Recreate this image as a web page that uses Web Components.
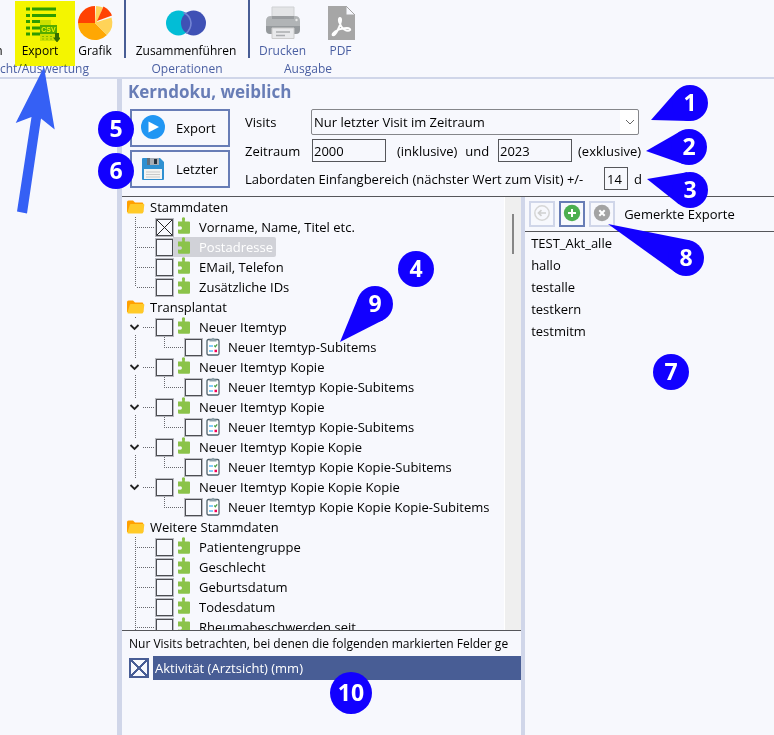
<!DOCTYPE html>
<html lang="de">
<head>
<meta charset="utf-8">
<title>Kerndoku Export</title>
<style>
  body { margin: 0; font: 13px/20px "Open Sans", "Noto Sans", sans-serif; color: #000; background: #f7f8fd; }
</style>
</head>
<body>
<export-app></export-app>
<script>
const define = (name, html, setup) => {
  const tpl = document.createElement('template');
  tpl.innerHTML = '<style>*{box-sizing:border-box}button,input,select{font:inherit;color:inherit;margin:0}svg{display:block}</style>' + html;
  customElements.define(name, class extends HTMLElement {
    constructor() {
      super();
      this.attachShadow({ mode: 'open' }).append(tpl.content.cloneNode(true));
    }
    connectedCallback() { if (setup) setup(this, this.shadowRoot); }
  });
};

const ICONS = {
  csv: `<svg width="40" height="40" viewBox="0 0 40 40"><path d="M6 7h4m2 0h24M6 13.500h4m2 0h24M6 19.500h4m2 0h8M6 26h4m2 0h8M6 32h4m2 0h8" stroke="#2f9e12" stroke-width="3.200"/><path d="M20 18h11l5 5v16H20z" fill="#cfe3a0"/><path d="M31 18l5 5h-5z" fill="#fbf6a0"/><rect x="20" y="23" width="17" height="9" fill="#55ad22"/><text x="28.500" y="30" text-anchor="middle" font-family="Liberation Sans, sans-serif" font-weight="700" font-size="7" fill="#f0f7dc">CSV</text><path d="M22 34.500h2m2 0h2m2 0h2M22 37h2m2 0h2m2 0h2" stroke="#86bd40"/><path d="M35 31h4v4.500h2l-4 5-4-5h2z" fill="#356f22"/></svg>`,
  pie: `<svg width="40" height="40" viewBox="0 0 40 40"><path d="M20 21V4A17 17 0 0 0 3 21z" fill="#ff4203"/><path d="M20 21H3a17 17 0 0 0 29 12z" fill="#ffa703"/><path d="M20 21l12 12A17 17 0 0 0 36.500 15.500L22 20l6-14.500A17 17 0 0 0 21 4z" fill="#ffd358"/><path d="M22 19L28.500 4.500q6 3 8.500 9z" fill="#ff4203"/></svg>`,
  merge: `<svg width="40" height="40" viewBox="0 0 40 40"><circle cx="12.500" cy="21" r="12.500" fill="#02bdd6"/><circle cx="27.500" cy="21" r="12.500" fill="#3f51b5"/><path d="M17.500 10.500a12.500 12.500 0 0 1 7.500 10.500q0 6-5 10.500" fill="none" stroke="#7485d4" stroke-width="1.600"/></svg>`,
  print: `<svg width="40" height="40" viewBox="0 0 40 40"><path d="M9 5h22v11H9z" fill="#e3e4e6" stroke="#cfd1d3"/><rect x="3" y="18" width="34" height="14" rx="4" fill="#95999c"/><path d="M3 24v-5q0-5 5-5h24q5 0 5 5v5z" fill="#b1b4b6"/><path d="M9 14h22v3H9z" fill="#999c9f"/><path d="M9 26h22v10.500H9z" fill="#e8e9eb" stroke="#ccc"/><path d="M13 30h14M13 33.500h9" stroke="#aaadb0" stroke-width="1.500"/><circle cx="33.500" cy="18" r="1.200" fill="#e9e9e9"/></svg>`,
  pdf: `<svg width="40" height="40" viewBox="0 0 40 40"><path d="M7 4h18l9 9v25H7z" fill="#a6a6a6"/><path d="M25 4v9h9z" fill="#f7f8fd" stroke="#a6a6a6"/><path d="M19 16q-1.700.500-.800 4q1.500 5 5 7.500q4 2.500 6 .300q0-2.300-6-1.500q-5.500.800-8.700 3q-3.500 2.600-2.800 3.800q2 .700 4.800-4.600q2.500-5 3.300-8.600q.700-3.700-.800-3.900z" fill="none" stroke="#fff" stroke-width="2"/></svg>`,
  play: `<svg width="24" height="24" viewBox="0 0 24 24"><circle cx="12" cy="11" r="12" fill="#2196f3"/><path d="M7.500 5.500L18 11 7.500 16.500z" fill="#fff"/></svg>`,
  disk: `<svg width="24" height="24" viewBox="0 0 24 24"><path d="M1 2q0-1 1-1h17l4 4v17q0 1-1 1H2q-1 0-1-1z" fill="#2f90d1"/><path d="M6 1h12v7H6z" fill="#a6adb5"/><path d="M6 1h3v7H6z" fill="#63707c"/><rect x="13" y="2" width="3" height="5" fill="#26323f"/><path d="M3 12h18v10H3z" fill="#f4f4f2"/><path d="M5 15h14M5 17.500h14M5 20h14" stroke="#c9c9c9"/></svg>`,
  folder: `<svg width="18" height="16" viewBox="0 0 18 16"><path d="M0 3q0-1.500 1.500-1.500h4.500l2 2h7q1.300 0 1.300 1.300V13H0z" fill="#ffa000"/><path d="M2.800 6q.2-1 1.200-1h12.500q1 0 .8 1l-1.100 7.500q-.3 1-1.200 1H1.200q-1 0-.8-1z" fill="#ffca28"/></svg>`,
  puzzle: `<svg width="14" height="20" viewBox="0 0 14 20"><path d="M1 4.500h3.700q.8 0 .5-.8Q4.200.300 6.500.300t1.300 3.400q-.3.800.5.800H12q1 0 1 1V15.500q0 1.200-1 1.200H2q-1 0-1-1.200v-2.500q0-.800.800-.500Q5 13.300 5 11T1.800 9.500Q1 9.800 1 9z" fill="#8bc34a"/></svg>`,
  clip: `<svg width="14" height="20" viewBox="0 0 14 20"><rect x="1" y="2.500" width="12" height="15.500" rx="1.500" fill="#fff" stroke="#50626c" stroke-width="1.300"/><path d="M3.500 4.500V2.500H5.500Q5.500.7 7 .7t1.500 1.800h2v2z" fill="#8fa3ad"/><path d="M3 9h4M3 14h4" stroke="#5fbdf8" stroke-width="1.600"/><path d="M8.300 8.500l1 1.200 1.900-2.400" fill="none" stroke="#43a047" stroke-width="1.200"/><path d="M8.500 12.700h2.500v2.500H8.500z" fill="#f50057"/></svg>`,
  back: `<svg width="20" height="20" viewBox="0 0 20 20"><circle cx="10" cy="9" r="7.200" fill="none" stroke="#d6d6d6" stroke-width="1.500"/><path d="M14 9H7M9.500 6.200L6.500 9l3 2.800" fill="none" stroke="#d0d0d0" stroke-width="1.700"/></svg>`,
  plus: `<svg width="20" height="20" viewBox="0 0 20 20"><circle cx="10" cy="9" r="8.200" fill="#4caf50"/><path d="M10 5v8M6 9h8" stroke="#fff" stroke-width="2"/></svg>`,
  cross: `<svg width="20" height="20" viewBox="0 0 20 20"><circle cx="10" cy="9" r="8.200" fill="#a3a3a3"/><path d="M7.300 6.300l5.400 5.400M12.700 6.300l-5.400 5.400" stroke="#fff" stroke-width="2"/></svg>`
};

/* Ribbon */
define('ribbon-item', `<style>
  :host { display: block; flex: none; }
  button { display: grid; justify-items: center; align-content: end; width: 100%; height: 60px; padding: 0; border: 0; background: none; white-space: nowrap; line-height: 18px; }
  :host([muted]) button { color: #4a5fa2; }
</style><button type="button"><span class="icon"></span><span><slot></slot></span></button>`,
  (el, root) => { root.querySelector('.icon').innerHTML = ICONS[el.getAttribute('icon')] || ''; });

define('ribbon-group', `<style>
  :host { display: flex; flex-direction: column; flex: none; position: relative; }
  .items { display: flex; height: 60px; }
  .name { text-align: center; color: #4a5fa2; height: 17px; line-height: 17px; white-space: nowrap; }
  :host([cut]) .name { text-align: left; }
</style><div class="items"><slot></slot></div><div class="name"></div>`,
  (el, root) => { root.querySelector('.name').textContent = el.getAttribute('name'); });

define('app-ribbon', `<style>
  :host { display: flex; height: 79px; border-bottom: 2px solid #d0d6e9; overflow: hidden; font-size: 12px; }
  ribbon-group:nth-of-type(1) { width: 124px; }
  ribbon-group:nth-of-type(2) { width: 122px; }
  ribbon-group:nth-of-type(3) { width: 116px; }
  hr { width: 2px; height: 58px; margin: 0; border: 0; background: #485d95; flex: none; }
  .w1 { width: 14px; margin-left: -8px; margin-right: 8px; }
  .w2 { width: 52px; } .w3 { width: 58px; } .w4 { width: 120px; } .w5 { width: 65px; } .w6 { width: 51px; }
</style>
<ribbon-group name="cht/Auswertung" cut><ribbon-item class="w1">n</ribbon-item><ribbon-item class="w2" icon="csv">Export</ribbon-item><ribbon-item class="w3" icon="pie">Grafik</ribbon-item></ribbon-group>
<hr>
<ribbon-group name="Operationen"><ribbon-item class="w4" icon="merge">Zusammenführen</ribbon-item></ribbon-group>
<hr>
<ribbon-group name="Ausgabe"><ribbon-item class="w5" icon="print" muted>Drucken</ribbon-item><ribbon-item class="w6" icon="pdf" muted>PDF</ribbon-item></ribbon-group>`);

/* Head of the export form */
define('action-button', `<style>
  :host { display: block; }
  button { display: flex; align-items: center; gap: 11px; width: 100px; height: 38px; padding: 0 9px; border: 2px solid #687db6; background: #f7f8fd; }
  svg { overflow: visible; }
</style><button type="button"><span class="icon"></span><span><slot></slot></span></button>`,
  (el, root) => { root.querySelector('.icon').innerHTML = ICONS[el.getAttribute('icon')]; });

define('export-form', `<style>
  :host { display: block; padding: 0 8px 5px; border-bottom: 1px solid #55565a; }
  h1 { margin: 0 -2px; padding-bottom: 4px; font-size: 17px; line-height: 26px; color: #687db6; }
  form { display: flex; gap: 15px; }
  .actions { display: grid; gap: 3px; align-content: start; }
  .fields { display: grid; gap: 3px; flex: 1; min-width: 0; align-content: start; }
  .row { display: flex; align-items: center; height: 25px; white-space: nowrap; }
  .row:first-child { height: 26px; }
  .lead { width: 67px; flex: none; }
  .range { width: 359px; flex: none; }
  .between { width: 112px; padding-left: 11px; display: flex; gap: 8px; flex: none; }
  .after { padding-left: 6px; }
  input { width: 74px; height: 23px; padding: 0 1px; border: 1px solid #55565a; background: #f7f8fd; flex: none; }
  #days { width: 24px; padding: 0 2px; }
  .pick { display: grid; width: 328px; height: 26px; margin-left: -1px; }
  select { grid-area: 1/1; appearance: none; width: 100%; height: 26px; padding: 0 24px 0 2px; border: 1px solid #85868a; border-radius: 2px; background: linear-gradient(#fff, #fff) right/18px no-repeat #f7f8fd; }
  .pick svg { grid-area: 1/1; place-self: center end; margin-right: 4px; pointer-events: none; }
</style>
<h1>Kerndoku, weiblich</h1>
<form>
  <div class="actions"><action-button icon="play">Export</action-button><action-button icon="disk">Letzter</action-button></div>
  <div class="fields">
    <div class="row"><label class="lead" for="visits">Visits</label><div class="pick"><select id="visits"><option>Nur letzter Visit im Zeitraum</option></select><svg width="10" height="8" viewBox="0 0 10 8"><path d="M1 2l4 4 4-4" fill="none" stroke="#666"/></svg></div></div>
    <div class="row"><label class="lead" for="from">Zeitraum</label><input id="from" value="2000"><span class="between"><span>(inklusive)</span><label for="to">und</label></span><input id="to" value="2023"><span class="after">(exklusive)</span></div>
    <div class="row"><label class="range" for="days">Labordaten Einfangbereich (nächster Wert zum Visit) +/-</label><input id="days" value="14"><span class="after">d</span></div>
  </div>
</form>`);

/* Tree */
define('tree-folder', `<style>
  :host { display: flex; align-items: center; height: 20px; padding-left: 5px; gap: 5px; white-space: nowrap; }
  span { line-height: 20px; }
</style><span class="icon"></span><span><slot></slot></span>`,
  (el, root) => { root.querySelector('.icon').innerHTML = ICONS.folder; });

define('tree-node', `<style>
  :host { display: flex; align-items: center; height: 20px; white-space: nowrap; }
  .guide { flex: none; }
  input { appearance: none; flex: none; width: 17px; height: 17px; border: 1px solid #4c4d52; outline: 1px solid #b9bac0; outline-offset: 0; background: #f7f8fd; }
  input:checked { background: linear-gradient(45deg, transparent 47%, #222 47%, #222 53%, transparent 53%), linear-gradient(-45deg, transparent 47%, #222 47%, #222 53%, transparent 53%); }
  label { display: flex; align-items: center; height: 20px; padding: 0 3px 0 4px; gap: 8px; border-radius: 0 2px 2px 0; }
  :host([selected]) label { background: #d1d2d8; color: #fff; }
</style><span class="guide"></span><input type="checkbox" id="c"><label for="c"><span class="icon"></span><span><slot></slot></span></label>`,
  (el, root) => {
    const kind = el.getAttribute('kind') || 'leaf', last = el.hasAttribute('last');
    const wide = kind === 'sub';
    let d = '', chevron = '';
    if (kind === 'leaf') d = `M13.500 0V${last ? 10 : 20}M15 10.500H32`;
    if (kind === 'open') {
      d = `M13.500 0V2${last ? '' : 'M13.500 18V20'}M21 10.500H32`;
      chevron = '<path d="M8.500 8l4 4 4-4" fill="none" stroke="#222" stroke-width="1.800"/>';
    }
    if (wide) d = `${last ? '' : 'M13.500 0V20'}M42.500 0V10M42 10.500H61`;
    const w = wide ? 63 : 34;
    root.querySelector('.guide').innerHTML = `<svg width="${w}" height="20" viewBox="0 0 ${w} 20"><path d="${d}" fill="none" stroke="#66676c" stroke-dasharray="1 1"/>${chevron}</svg>`;
    root.querySelector('.icon').innerHTML = wide ? ICONS.clip : ICONS.puzzle;
    root.querySelector('input').checked = el.hasAttribute('checked');
  });

define('item-tree', `<style>
  :host { display: grid; grid-template-columns: minmax(0, 1fr) 17px; min-height: 0; overflow: hidden; }
  .list { overflow: hidden; min-height: 0; }
  .bar { background: #efefef; border-left: 1px solid #fff; padding: 17px 7px; }
  .bar div { width: 2px; height: 40px; background: #868686; }
</style>
<div class="list">
<tree-folder>Stammdaten</tree-folder>
<tree-node checked>Vorname, Name, Titel etc.</tree-node>
<tree-node selected>Postadresse</tree-node>
<tree-node>EMail, Telefon</tree-node>
<tree-node last>Zusätzliche IDs</tree-node>
<tree-folder>Transplantat</tree-folder>
<tree-node kind="open">Neuer Itemtyp</tree-node>
<tree-node kind="sub">Neuer Itemtyp-Subitems</tree-node>
<tree-node kind="open">Neuer Itemtyp Kopie</tree-node>
<tree-node kind="sub">Neuer Itemtyp Kopie-Subitems</tree-node>
<tree-node kind="open">Neuer Itemtyp Kopie</tree-node>
<tree-node kind="sub">Neuer Itemtyp Kopie-Subitems</tree-node>
<tree-node kind="open">Neuer Itemtyp Kopie Kopie</tree-node>
<tree-node kind="sub">Neuer Itemtyp Kopie Kopie-Subitems</tree-node>
<tree-node kind="open" last>Neuer Itemtyp Kopie Kopie Kopie</tree-node>
<tree-node kind="sub" last>Neuer Itemtyp Kopie Kopie Kopie-Subitems</tree-node>
<tree-folder>Weitere Stammdaten</tree-folder>
<tree-node>Patientengruppe</tree-node>
<tree-node>Geschlecht</tree-node>
<tree-node>Geburtsdatum</tree-node>
<tree-node>Todesdatum</tree-node>
<tree-node>Rheumabeschwerden seit</tree-node>
</div>
<div class="bar"><div></div></div>`);

define('visit-filter', `<style>
  :host { display: block; min-height: 105px; border-top: 1px solid #55565a; overflow: hidden; }
  p { margin: 0; padding-left: 7px; font-size: 12px; line-height: 25px; white-space: nowrap; }
  .row { display: flex; align-items: center; gap: 4px; padding-left: 7px; }
  input { appearance: none; width: 20px; height: 20px; border: 2px solid #485d95; flex: none; background: linear-gradient(45deg, transparent 46%, #485d95 46%, #485d95 54%, transparent 54%), linear-gradient(-45deg, transparent 46%, #485d95 46%, #485d95 54%, transparent 54%); }
  label { flex: 1; padding-left: 2px; line-height: 24px; background: #485d95; color: #fff; }
</style>
<p>Nur Visits betrachten, bei denen die folgenden markierten Felder ge</p>
<div class="row"><input type="checkbox" id="a" checked><label for="a">Aktivität (Arztsicht) (mm)</label></div>`);

/* Stored exports */
define('tool-button', `<style>
  :host { display: block; }
  button { display: grid; place-items: center; width: 26px; height: 26px; padding: 0; border: 2px solid #d0d6e9; background: none; }
  :host([active]) button { border-color: #687db6; }
</style><button type="button"></button>`,
  (el, root) => {
    const b = root.querySelector('button');
    b.innerHTML = ICONS[el.getAttribute('icon')];
    b.setAttribute('aria-label', el.getAttribute('hint'));
  });

define('saved-exports', `<style>
  :host { display: block; min-width: 0; }
  header { display: flex; align-items: center; gap: 4px; height: 35px; padding: 0 4px; border-bottom: 1px solid #55565a; white-space: nowrap; }
  header span { padding-left: 5px; }
  ul { margin: 0; padding: 0 6px; list-style: none; line-height: 22px; }
</style>
<header><tool-button icon="back" hint="Laden"></tool-button><tool-button icon="plus" hint="Merken" active></tool-button><tool-button icon="cross" hint="Entfernen"></tool-button><span>Gemerkte Exporte</span></header>
<ul><li>TEST_Akt_alle</li><li>hallo</li><li>testalle</li><li>testkern</li><li>testmitm</li></ul>`);

/* Numbered marker: a disc, with an optional point towards (dx, dy) from its centre */
define('call-out', `<style>
  :host { position: absolute; width: 0; height: 0; }
  svg { position: absolute; left: -100px; top: -100px; pointer-events: none; }
  text { font: 700 23px "Open Sans", sans-serif; fill: #fff; text-anchor: middle; }
</style><svg width="200" height="200" viewBox="-100 -100 200 200"><path fill="#1200ff"/><circle fill="#1200ff"/><text y="8"></text></svg>`,
  (el, root) => {
    const [x, y, dx, dy] = el.getAttribute('at').split(' ').map(Number);
    const r = Number(el.getAttribute('r') || 18);
    el.style.left = x + 'px';
    el.style.top = y + 'px';
    root.querySelector('circle').setAttribute('r', r);
    root.querySelector('text').textContent = el.getAttribute('n');
    if (!dx) return;
    const a = Math.atan2(dy, dx), b = Math.acos(r / Math.hypot(dx, dy));
    const p = t => `${r * Math.cos(t)} ${r * Math.sin(t)}`;
    root.querySelector('path').setAttribute('d', `M${dx} ${dy}L${p(a + b)}L0 0L${p(a - b)}Z`);
  });

define('mark-layer', `<style>
  :host { position: absolute; inset: 0; pointer-events: none; overflow: hidden; }
  .arrow { position: absolute; left: 10px; top: 65px; }
</style>
<svg class="arrow" width="50" height="150" viewBox="10 65 50 150"><path d="M44 67L54.700 129.500 41 118.500 27 213.500 17 211.500 31.500 117 15.700 123z" fill="#3560f5"/></svg>
<call-out n="1" at="690 103 -39 17"></call-out>
<call-out n="2" at="689 147 -43 4"></call-out>
<call-out n="3" at="690 190 -43 -11"></call-out>
<call-out n="4" at="416 269"></call-out>
<call-out n="5" at="116 129"></call-out>
<call-out n="6" at="116 171"></call-out>
<call-out n="7" at="671 372"></call-out>
<call-out n="8" at="686 258 -78 -34"></call-out>
<call-out n="9" at="375 304 -35 38"></call-out>
<call-out n="10" r="21" at="351 693"></call-out>`);

define('export-app', `<style>
  :host { display: grid; grid-template-rows: auto minmax(0, 1fr); height: 100vh; position: relative; overflow: hidden; background: #f7f8fd; }
  .shell { display: grid; grid-template-columns: 117px minmax(0, 1fr); min-height: 0; }
  main { display: grid; grid-template-rows: auto minmax(0, 1fr); border-left: 5px solid #d0d6e9; min-height: 0; }
  .panes { display: grid; grid-template-columns: minmax(0, 1.62fr) minmax(0, 1fr); min-height: 0; }
  .left { display: grid; grid-template-rows: minmax(0, 1fr) auto; min-height: 0; min-width: 0; border-right: 4px solid #d0d6e9; }
  .glow { position: absolute; left: 15px; top: 1px; width: 60px; height: 65px; background: #fcfc00; mix-blend-mode: multiply; pointer-events: none; }
</style>
<app-ribbon></app-ribbon>
<div class="shell"><aside></aside><main><export-form></export-form><div class="panes"><div class="left"><item-tree></item-tree><visit-filter></visit-filter></div><saved-exports></saved-exports></div></main></div>
<div class="glow"></div>
<mark-layer></mark-layer>`);
</script>
</body>
</html>
